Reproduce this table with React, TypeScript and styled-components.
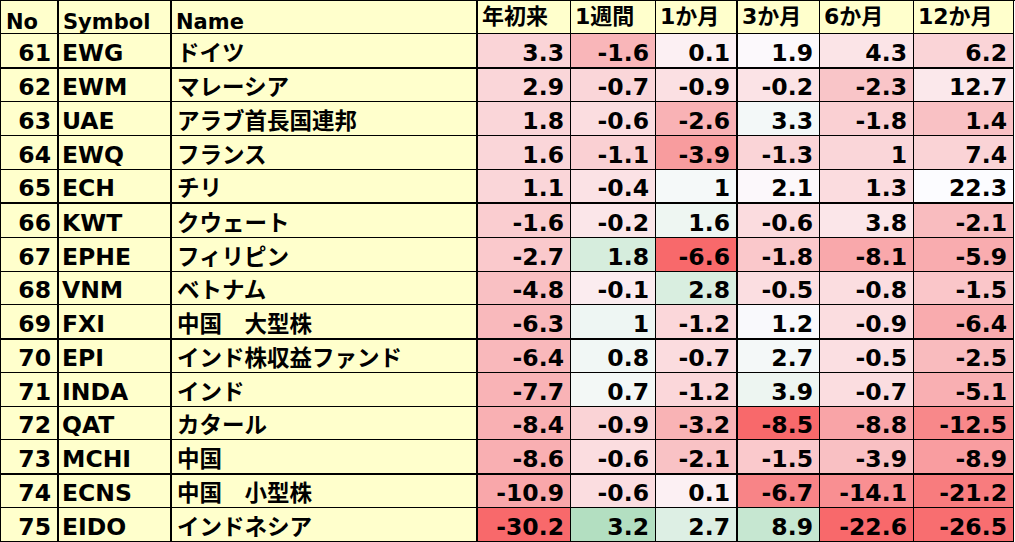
import React from "react";
import styled, { createGlobalStyle } from "styled-components";

const GlobalStyle = createGlobalStyle`
  html, body {
    margin: 0;
    padding: 0;
    background: #ffffff;
  }
`;

const COLS = "58px 113px 306px 93px 85px 82px 82px 94px 100px";

type Row = {
  no: number;
  symbol: string;
  name: string;
  values: [string, string][];
  height: number;
  thick?: boolean;
};

const rows: Row[] = [
  { no: 61, symbol: "EWG", name: "ドイツ", height: 35, thick: true, values: [["3.3", "#FAD4D7"], ["-1.6", "#F9B6B9"], ["0.1", "#FCF0F3"], ["1.9", "#FCF9FC"], ["4.3", "#FBE4E7"], ["6.2", "#FAD4D7"]] },
  { no: 62, symbol: "EWM", name: "マレーシア", height: 33, values: [["2.9", "#FAD6D9"], ["-0.7", "#FAD6D9"], ["-0.9", "#FBE0E3"], ["-0.2", "#FBE3E6"], ["-2.3", "#F9C5C8"], ["12.7", "#FBE8EB"]] },
  { no: 63, symbol: "UAE", name: "アラブ首長国連邦", height: 34, values: [["1.8", "#FAD6D9"], ["-0.6", "#FBDDE0"], ["-2.6", "#F9B2B5"], ["3.3", "#F3F8F8"], ["-1.8", "#FAD0D3"], ["1.4", "#F9C1C4"]] },
  { no: 64, symbol: "EWQ", name: "フランス", height: 34, values: [["1.6", "#FAD6D9"], ["-1.1", "#FAD0D3"], ["-3.9", "#F89C9E"], ["-1.3", "#FAD4D7"], ["1", "#FAD6D9"], ["7.4", "#FAD3D6"]] },
  { no: 65, symbol: "ECH", name: "チリ", height: 34, thick: true, values: [["1.1", "#FAD6D9"], ["-0.4", "#FBE2E5"], ["1", "#F5F9F9"], ["2.1", "#FCF8FB"], ["1.3", "#FBDCDF"], ["22.3", "#FCFCFF"]] },
  { no: 66, symbol: "KWT", name: "クウェート", height: 34, values: [["-1.6", "#FACDD0"], ["-0.2", "#FBE6E9"], ["1.6", "#EEF6F2"], ["-0.6", "#FBDCDF"], ["3.8", "#FBE6E9"], ["-2.1", "#F9BCBF"]] },
  { no: 67, symbol: "EPHE", name: "フィリピン", height: 34, values: [["-2.7", "#FAC9CC"], ["1.8", "#D6EDDD"], ["-6.6", "#F8696B"], ["-1.8", "#FAC8CB"], ["-8.1", "#F9A8AB"], ["-5.9", "#F9ACAF"]] },
  { no: 68, symbol: "VNM", name: "ベトナム", height: 33, values: [["-4.8", "#F9C0C3"], ["-0.1", "#FBECEF"], ["2.8", "#D9EEE0"], ["-0.5", "#FBDEE1"], ["-0.8", "#FBDDE0"], ["-1.5", "#FAC6C9"]] },
  { no: 69, symbol: "FXI", name: "中国　大型株", height: 35, thick: true, values: [["-6.3", "#F9B9BC"], ["1", "#EEF6F3"], ["-1.2", "#FBD7DA"], ["1.2", "#F9F9FC"], ["-0.9", "#FBDDE0"], ["-6.4", "#F9ABAE"]] },
  { no: 70, symbol: "EPI", name: "インド株収益ファンド", height: 33, values: [["-6.4", "#F9B8BB"], ["0.8", "#F1F7F5"], ["-0.7", "#FBDCDF"], ["2.7", "#F4F8F8"], ["-0.5", "#FBDFE2"], ["-2.5", "#F9BBBE"]] },
  { no: 71, symbol: "INDA", name: "インド", height: 34, values: [["-7.7", "#F9B3B6"], ["0.7", "#F3F8F6"], ["-1.2", "#FBD7DA"], ["3.9", "#EDF5F1"], ["-0.7", "#FBDDE0"], ["-5.1", "#F9AFB2"]] },
  { no: 72, symbol: "QAT", name: "カタール", height: 33, values: [["-8.4", "#F9B0B3"], ["-0.9", "#FAD3D6"], ["-3.2", "#F9B3B5"], ["-8.5", "#F8696B"], ["-8.8", "#F9A4A7"], ["-12.5", "#F8888A"]] },
  { no: 73, symbol: "MCHI", name: "中国", height: 35, thick: true, values: [["-8.6", "#F9AFB2"], ["-0.6", "#FBDDE0"], ["-2.1", "#F9C2C5"], ["-1.5", "#FAC9CC"], ["-3.9", "#F9C0C3"], ["-8.9", "#F99DA0"]] },
  { no: 74, symbol: "ECNS", name: "中国　小型株", height: 33, values: [["-10.9", "#F9A7AA"], ["-0.6", "#FBDDE0"], ["0.1", "#FCF0F3"], ["-6.7", "#F88487"], ["-14.1", "#F98F92"], ["-21.2", "#F87C7E"]] },
  { no: 75, symbol: "EIDO", name: "インドネシア", height: 34, values: [["-30.2", "#F8696B"], ["3.2", "#B3DFC1"], ["2.7", "#DDEFE4"], ["8.9", "#C6E7D1"], ["-22.6", "#F8696B"], ["-26.5", "#F86E70"]] },
];

const headers = ["No", "Symbol", "Name", "年初来", "1週間", "1か月", "3か月", "6か月", "12か月"];
const thickRight = [true, true, true, false, false, true, false, false, false];

const Sheet = styled.div`
  width: 1014px;
  border-top: 1px solid #000;
  border-left: 1px solid #000;
  font-family: "DejaVu Sans", "Noto Sans CJK JP", sans-serif;
  font-weight: bold;
  color: #000;
`;

const GridRow = styled.div<{ $h: number }>`
  display: grid;
  grid-template-columns: ${COLS};
  height: ${(p) => p.$h}px;
`;

// Excel-style cell: text sits on the bottom of the cell
const Cell = styled.div<{
  $bg?: string;
  $thickRight?: boolean;
  $thickBottom?: boolean;
  $align?: "left" | "right";
  $size?: number;
  $pl?: number;
  $pb?: number;
}>`
  box-sizing: border-box;
  display: flex;
  align-items: flex-end;
  justify-content: ${(p) => (p.$align === "right" ? "flex-end" : "flex-start")};
  padding: 0 ${(p) => (p.$align === "right" ? 6 : 0)}px ${(p) => p.$pb ?? 2}px
    ${(p) => (p.$align === "right" ? 0 : p.$pl ?? 4)}px;
  font-size: ${(p) => p.$size ?? 21}px;
  background: ${(p) => p.$bg || "#FFFFCC"};
  border-right: ${(p) => (p.$thickRight ? 2 : 1)}px solid #000;
  border-bottom: ${(p) => (p.$thickBottom ? 2 : 1)}px solid #000;
  white-space: nowrap;
  overflow: hidden;
  line-height: 1;
`;

export default function App() {
  return (
    <>
      <GlobalStyle />
      <Sheet>
        <GridRow $h={33}>
          {headers.map((h, i) => (
            <Cell
              key={h}
              $thickRight={thickRight[i]}
              $pl={i === 0 ? 5 : 4}
              $size={i > 2 ? 22 : 21}
              $pb={i > 2 ? 5 : 0}
            >
              {h}
            </Cell>
          ))}
        </GridRow>
        {rows.map((r) => (
          <GridRow key={r.no} $h={r.height}>
            <Cell $align="right" $size={23.5} $thickRight $thickBottom={r.thick}>
              {r.no}
            </Cell>
            <Cell $size={23.5} $pl={3} $thickRight $thickBottom={r.thick}>
              {r.symbol}
            </Cell>
            <Cell $size={22.5} $pl={5} $pb={3} $thickRight $thickBottom={r.thick}>
              {r.name}
            </Cell>
            {r.values.map(([v, bg], i) => (
              <Cell
                key={i}
                $align="right"
                $size={23.5}
                $bg={bg}
                $thickRight={thickRight[i + 3]}
                $thickBottom={r.thick}
              >
                {v}
              </Cell>
            ))}
          </GridRow>
        ))}
      </Sheet>
    </>
  );
}
